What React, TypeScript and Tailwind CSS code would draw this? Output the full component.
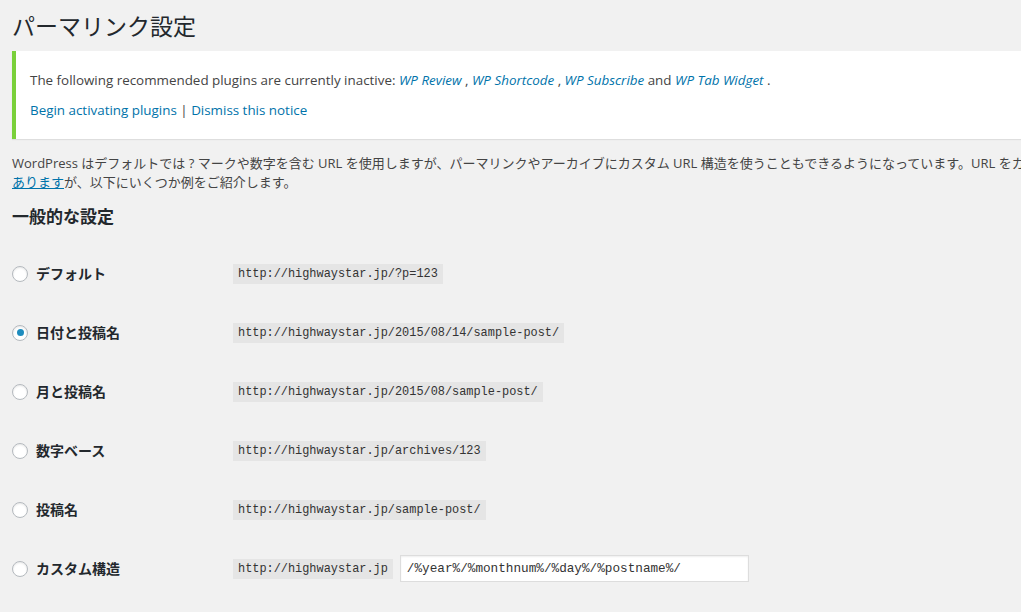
const sans = "font-['Open_Sans','Noto_Sans_CJK_JP',sans-serif]";
const mono = "font-['Liberation_Mono','DejaVu_Sans_Mono',monospace]";

type Option = {
  label: string;
  example: string;
  checked?: boolean;
  custom?: boolean;
};

const options: Option[] = [
  { label: "デフォルト", example: "http://highwaystar.jp/?p=123" },
  {
    label: "日付と投稿名",
    example: "http://highwaystar.jp/2015/08/14/sample-post/",
    checked: true,
  },
  { label: "月と投稿名", example: "http://highwaystar.jp/2015/08/sample-post/" },
  { label: "数字ベース", example: "http://highwaystar.jp/archives/123" },
  { label: "投稿名", example: "http://highwaystar.jp/sample-post/" },
  { label: "カスタム構造", example: "http://highwaystar.jp", custom: true },
];

function Radio({ checked }: { checked?: boolean }) {
  return (
    <span className="flex h-[16px] w-[16px] shrink-0 items-center justify-center rounded-full border border-[#b4b9be] bg-white shadow-[inset_0_1px_2px_rgba(0,0,0,0.1)]">
      {checked && <span className="h-[7px] w-[7px] rounded-full bg-[#1e8cbe]" />}
    </span>
  );
}

function Notice() {
  return (
    <div className="w-full border-l-4 border-[#7ad03a] bg-white pl-[14px] pt-[20px] pb-[19px] text-[13.4px] leading-[19px] text-[#444] shadow-[0_1px_1px_rgba(0,0,0,0.08)]">
      <p className="whitespace-nowrap">
        The following recommended plugins are currently inactive:{" "}
        <a className="italic text-[#0073aa]">WP Review</a> ,{" "}
        <a className="italic text-[#0073aa]">WP Shortcode</a> ,{" "}
        <a className="italic text-[#0073aa]">WP Subscribe</a> and{" "}
        <a className="italic text-[#0073aa]">WP Tab Widget</a> .
      </p>
      <p className="mt-[11px] whitespace-nowrap">
        <a className="text-[#0073aa]">Begin activating plugins</a>
        <span className="text-[#444]"> | </span>
        <a className="text-[#0073aa]">Dismiss this notice</a>
      </p>
    </div>
  );
}

export default function App() {
  return (
    <div className={`h-[612px] w-full overflow-hidden bg-[#f1f1f1] pl-[12px] pt-[12px] ${sans}`}>
      <h1 className="text-[23px] leading-[29px] font-normal text-[#23282d]">
        パーマリンク設定
      </h1>

      <div className="mt-[10px]">
        <Notice />
      </div>

      <p className="mt-[15px] whitespace-nowrap text-[13px] leading-[19px] text-[#444]">
        WordPress はデフォルトでは ? マークや数字を含む URL を使用しますが、パーマリンクやアーカイブにカスタム URL 構造を使うこともできるようになっています。URL をカスタマイズすることで、リンクの美観や使いやすさ、前方互換性を改善できます。利用可能な多数のタグが
        <br />
        <a className="text-[#0073aa] underline">あります</a>が、以下にいくつか例をご紹介します。
      </p>

      <h2 className="mt-[15px] text-[17px] leading-[20px] font-bold text-[#23282d]">
        一般的な設定
      </h2>

      <div className="mt-[17px] flex flex-col">
        {options.map((o) => (
          <div key={o.label} className="flex h-[59px] items-center">
            <div className="flex w-[221px] items-center gap-[8px]">
              <Radio checked={o.checked} />
              <span className="text-[14px] font-bold text-[#23282d]">{o.label}</span>
            </div>
            <code
              className={`bg-[#e5e5e5] px-[5px] py-[2px] text-[11.9px] leading-[16px] text-[#333] ${mono}`}
            >
              {o.example}
            </code>
            {o.custom && (
              <input
                readOnly
                value="/%year%/%monthnum%/%day%/%postname%/"
                className={`ml-[7px] h-[27px] w-[349px] border border-[#ddd] bg-white px-[6px] text-[12.7px] text-[#333] shadow-[inset_0_1px_2px_rgba(0,0,0,0.07)] outline-none ${mono}`}
              />
            )}
          </div>
        ))}
      </div>
    </div>
  );
}
